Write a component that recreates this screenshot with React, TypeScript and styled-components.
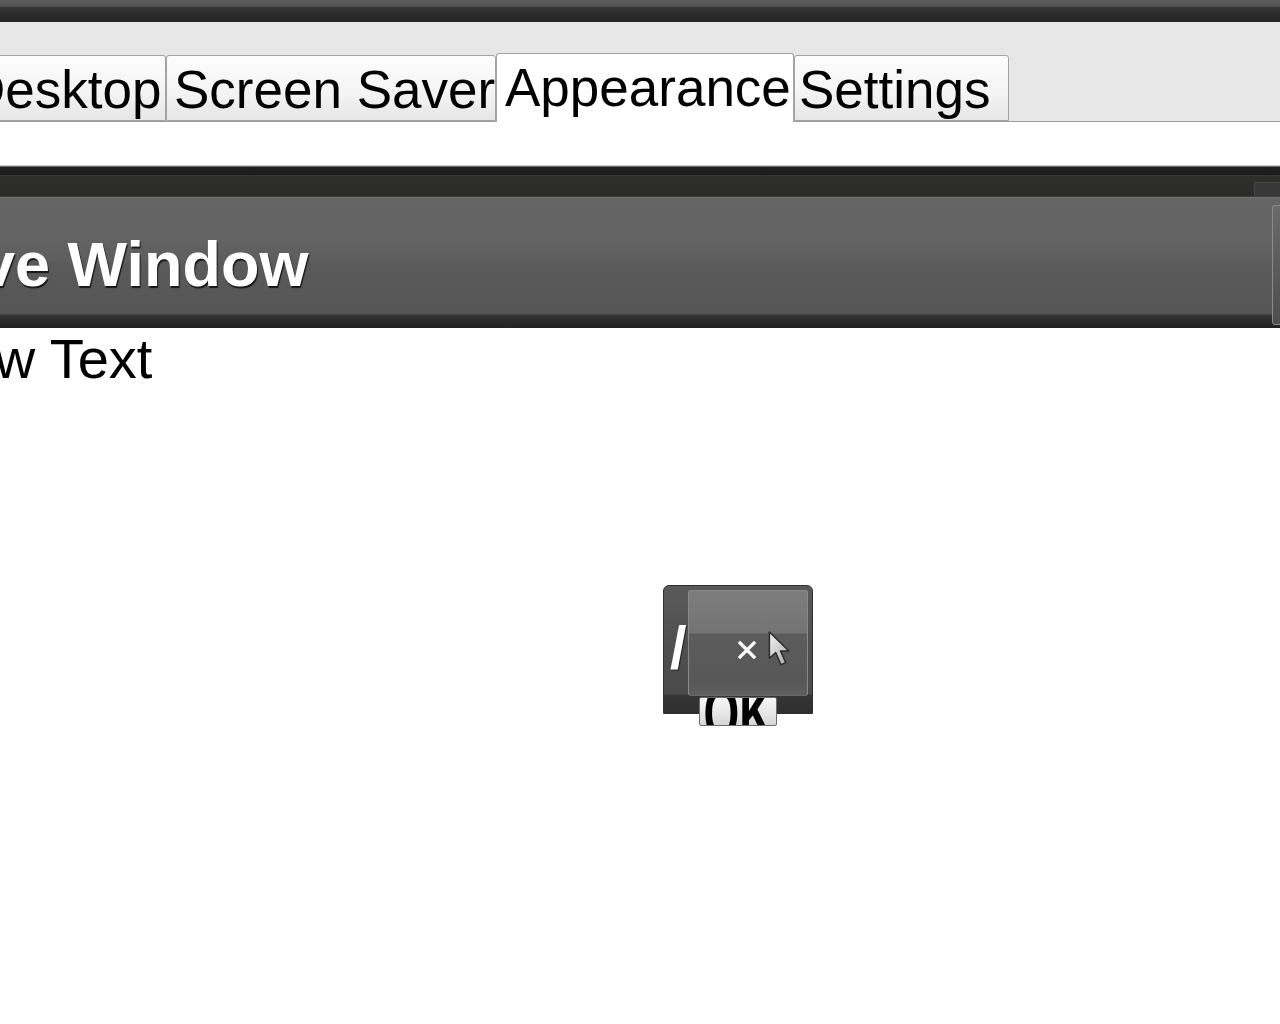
import React from "react";
import styled, { createGlobalStyle } from "styled-components";

const tabs = [
  { label: "Desktop", width: 207, shift: -41, pad: 7 },
  { label: "Screen Saver", width: 330, pad: 7 },
  { label: "Appearance", width: 298, pad: 8, active: true },
  { label: "Settings", width: 215, pad: 4 },
];

const GlobalStyle = createGlobalStyle`
  html, body {
    margin: 0;
    padding: 0;
    background: #ffffff;
  }
  body {
    font-family: "Liberation Sans", Arial, sans-serif;
    overflow: hidden;
  }
`;

const App = () => {
  return (
    <>
      <GlobalStyle />
      <Page>
        <TopChrome />
        <TabStrip>
          {tabs.map((tab, index) => (
            <Tab
              key={index}
              $active={!!tab.active}
              $width={tab.width}
              $shift={tab.shift || 0}
              $pad={tab.pad}
            >
              {tab.label}
            </Tab>
          ))}
        </TabStrip>
        <TabPanel />
        <Preview>
          <FrameTop>
            <FrameNub />
          </FrameTop>
          <TitleBar>
            <TitleText>Active Window</TitleText>
            <CaptionEdge />
          </TitleBar>
          <WindowBody>Window Text</WindowBody>

          <MessageBox>
            <BoxTitle>/</BoxTitle>
            <BoxInner>
              <CloseGlyph width="20" height="20" viewBox="0 0 20 20">
                <path
                  d="M3 3 L17 17 M17 3 L3 17"
                  stroke="#ffffff"
                  strokeWidth="3.2"
                  strokeLinecap="square"
                />
              </CloseGlyph>
              <Cursor width="28" height="40" viewBox="0 0 26 38">
                <defs>
                  <linearGradient id="cur" x1="0" y1="0" x2="1" y2="1">
                    <stop offset="0" stopColor="#f4f4f4" />
                    <stop offset="1" stopColor="#a9a9a9" />
                  </linearGradient>
                </defs>
                <path
                  d="M2 1 L2 26 L8 20.5 L13 32 L17.5 30 L12.5 19 L20.5 19 Z"
                  fill="url(#cur)"
                  stroke="#2b2b2b"
                  strokeWidth="1.4"
                  strokeLinejoin="round"
                />
              </Cursor>
            </BoxInner>
            <OkButton>
              <OkLabel>OK</OkLabel>
            </OkButton>
          </MessageBox>
        </Preview>
      </Page>
    </>
  );
};

export default App;

const Page = styled.div`
  width: 1280px;
  height: 1024px;
  overflow: hidden;
  background: #ffffff;
  display: flex;
  flex-direction: column;
`;

const TopChrome = styled.div`
  height: 22px;
  flex-shrink: 0;
  background: linear-gradient(
    to bottom,
    #5d5d5d 0px,
    #565656 6px,
    #676767 6px,
    #363636 7px,
    #2c2c2c 14px,
    #242424 22px
  );
`;

const TabStrip = styled.div`
  height: 100px;
  flex-shrink: 0;
  box-sizing: border-box;
  background: #e7e7e7;
  border-bottom: 1px solid #9d9d9d;
  display: flex;
  align-items: flex-end;
`;

const Tab = styled.div<{
  $active: boolean;
  $width: number;
  $shift: number;
  $pad: number;
}>`
  position: relative;
  z-index: ${(p) => (p.$active ? 2 : 1)};
  flex-shrink: 0;
  box-sizing: border-box;
  width: ${(p) => p.$width}px;
  height: ${(p) => (p.$active ? 69 : 66)}px;
  margin-left: ${(p) => p.$shift}px;
  margin-bottom: ${(p) => (p.$active ? -1 : 0)}px;
  padding: 4px 0 0 ${(p) => p.$pad}px;
  border: 1px solid #a3a3a3;
  border-bottom: ${(p) => (p.$active ? "none" : "1px solid #a3a3a3")};
  border-radius: 3px 3px 0 0;
  background: ${(p) =>
    p.$active
      ? "#ffffff"
      : "linear-gradient(to bottom, #fdfdfd 0%, #f3f3f3 60%, #e6e6e6 100%)"};
  font-family: "Liberation Sans", Arial, sans-serif;
  font-size: 53px;
  line-height: 59px;
  color: #000000;
  white-space: nowrap;
  overflow: hidden;
`;

const TabPanel = styled.div`
  height: 43px;
  flex-shrink: 0;
  background: #ffffff;
`;

const Preview = styled.div`
  position: relative;
  flex: 1;
  display: flex;
  flex-direction: column;
`;

const FrameTop = styled.div`
  height: 32px;
  flex-shrink: 0;
  display: flex;
  justify-content: flex-end;
  align-items: flex-end;
  background: linear-gradient(
    to bottom,
    #cfcfcf 0px,
    #bdbdbd 1px,
    #1f1f1f 2px,
    #1c1c1c 10px,
    #3a3a3a 10px,
    #2e2f2d 11px,
    #2b2c2a 31px,
    #3e3e3e 31px
  );
`;

const FrameNub = styled.div`
  width: 25px;
  height: 13px;
  margin-bottom: 1px;
  background: #383838;
  border-top: 1px solid #4a4a4a;
  border-left: 1px solid #4a4a4a;
  border-radius: 2px 0 0 0;
`;

const TitleBar = styled.div`
  height: 131px;
  flex-shrink: 0;
  display: flex;
  align-items: flex-start;
  justify-content: space-between;
  overflow: hidden;
  background: linear-gradient(
    to bottom,
    #717171 0px,
    #656565 2px,
    #636363 40px,
    #5e5e5e 64px,
    #5a5a5a 66px,
    #565656 116px,
    #4b4b4b 117px,
    #333333 119px,
    #2a2a2a 124px,
    #222222 131px
  );
`;

const TitleText = styled.div`
  margin-left: -139px;
  margin-top: 30px;
  font-family: "Liberation Sans", Arial, sans-serif;
  font-weight: 700;
  font-size: 63px;
  line-height: 74px;
  color: #ffffff;
  white-space: nowrap;
  text-shadow: 1px 2px 1px rgba(0, 0, 0, 0.75);
`;

const CaptionEdge = styled.div`
  width: 14px;
  height: 120px;
  margin-top: 8px;
  margin-right: -6px;
  box-sizing: border-box;
  border: 1px solid #8b8b8b;
  border-radius: 3px;
  background: linear-gradient(to bottom, #6a6a6a 0%, #5c5c5c 50%, #4e4e4e 100%);
`;

const WindowBody = styled.div`
  margin-left: -164px;
  padding-top: 1px;
  font-family: "Liberation Sans", Arial, sans-serif;
  font-size: 56px;
  line-height: 60px;
  color: #000000;
  white-space: nowrap;
`;

const MessageBox = styled.div`
  position: absolute;
  left: 663px;
  top: 420px;
  width: 150px;
  height: 129px;
  box-sizing: border-box;
  display: flex;
  align-items: flex-start;
  padding: 4px 4px 0 0;
  border: 1px solid #2f2f2f;
  border-radius: 6px 6px 0 0;
  background: linear-gradient(
    to bottom,
    #5a5a5a 0px,
    #4f4f4f 60px,
    #4b4b4b 108px,
    #363636 109px,
    #2e2e2e 127px
  );
`;

const BoxTitle = styled.div`
  width: 24px;
  flex-shrink: 0;
  margin-top: 30px;
  overflow: hidden;
  font-family: "Liberation Sans", Arial, sans-serif;
  font-weight: 700;
  font-size: 60px;
  line-height: 56px;
  color: #ffffff;
  text-indent: 6px;
  text-shadow: 1px 1px 1px rgba(0, 0, 0, 0.6);
`;

const BoxInner = styled.div`
  position: relative;
  width: 120px;
  height: 106px;
  box-sizing: border-box;
  border: 1px solid #8a8a8a;
  border-bottom-color: #6a6a6a;
  border-radius: 3px;
  background: linear-gradient(
    to bottom,
    #7d7d7d 0px,
    #747474 42px,
    #5c5c5c 43px,
    #575757 90px,
    #5f5f5f 104px
  );
`;

const CloseGlyph = styled.svg`
  position: absolute;
  left: 48px;
  top: 49px;
`;

const Cursor = styled.svg`
  position: absolute;
  left: 78px;
  top: 40px;
`;

const OkButton = styled.div`
  position: absolute;
  left: 35px;
  top: 111px;
  width: 78px;
  height: 29px;
  box-sizing: border-box;
  overflow: hidden;
  display: flex;
  justify-content: center;
  align-items: center;
  border: 1px solid #6c6c6c;
  border-radius: 2px;
  background: linear-gradient(to bottom, #f6f6f6 0%, #e9e9e9 50%, #d6d6d6 100%);
`;

const OkLabel = styled.span`
  display: inline-block;
  margin-top: 2px;
  font-family: "Liberation Sans", Arial, sans-serif;
  font-weight: 700;
  font-size: 46px;
  line-height: 46px;
  color: #000000;
  transform: scaleY(1.6);
`;
